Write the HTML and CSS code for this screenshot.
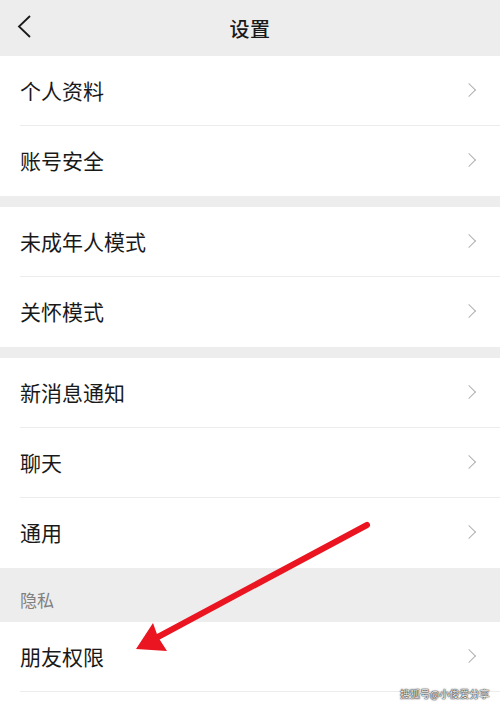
FILE: index.html
```html
<!DOCTYPE html>
<html lang="zh">
<head>
<meta charset="utf-8">
<link rel="stylesheet" href="styles.css">
</head>
<body>
<div class="page">
  <header class="topbar">
    <svg class="back" width="16" height="24" viewBox="0 0 16 24"><path d="M13 1 L2 11.5 L13 22" fill="none" stroke="#1a1a1a" stroke-width="1.8"/></svg>
    <div class="title">设置</div>
  </header>

  <section class="group">
    <div class="row"><span>个人资料</span><i class="chev"></i></div>
    <div class="row last"><span>账号安全</span><i class="chev"></i></div>
  </section>

  <section class="group">
    <div class="row"><span>未成年人模式</span><i class="chev"></i></div>
    <div class="row last"><span>关怀模式</span><i class="chev"></i></div>
  </section>

  <section class="group flush">
    <div class="row"><span>新消息通知</span><i class="chev"></i></div>
    <div class="row"><span>聊天</span><i class="chev"></i></div>
    <div class="row last"><span>通用</span><i class="chev"></i></div>
  </section>

  <div class="section-title">隐私</div>

  <section class="group flush tail">
    <div class="row"><span>朋友权限</span><i class="chev"></i></div>
  </section>

  <svg class="arrow" width="500" height="706" viewBox="0 0 500 706">
    <line x1="367" y1="525" x2="156" y2="638" stroke="#ea1520" stroke-width="6" stroke-linecap="round"/>
    <path d="M136 649 L153 623 L158 637 L167 651 Z" fill="#ea1520"/>
  </svg>

  <div class="watermark">搜狐号@小俊爱分享</div>
</div>
</body>
</html>
```

FILE: styles.css
```css
* { box-sizing: border-box; margin: 0; padding: 0; }
html, body { width: 500px; height: 706px; overflow: hidden; }
body {
  background: #ffffff;
  font-family: "Noto Sans CJK SC", "Noto Sans", sans-serif;
  color: #191919;
}
.page { position: relative; width: 500px; height: 706px; background: #ededed; }
.topbar {
  height: 56px;
  background: #ededed;
  display: flex;
  align-items: center;
  justify-content: center;
  position: relative;
}
.back { position: absolute; left: 17px; top: 15px; }
.title { font-size: 20px; font-weight: 500; color: #191919; letter-spacing: 0.5px; }
.group { background: #fff; margin-bottom: 11px; }
.group.flush { margin-bottom: 0; }
.group.tail { padding-bottom: 20px; }
.row {
  height: 70px;
  display: flex;
  align-items: center;
  justify-content: space-between;
  padding: 0 24px 2px 20px;
  font-size: 21px;
  position: relative;
}
.row::after {
  content: "";
  position: absolute;
  left: 20px;
  right: 0;
  bottom: 0;
  height: 1px;
  background: #ececec;
}
.row.last::after { display: none; }
.chev {
  width: 10px;
  height: 10px;
  border-top: 1.8px solid #b2b2b2;
  border-right: 1.8px solid #b2b2b2;
  transform: rotate(45deg);
  margin-right: 2px;
}
.section-title {
  height: 54px;
  display: flex;
  align-items: center;
  padding: 8px 20px 0;
  font-size: 17px;
  color: #808080;
}
.arrow { position: absolute; left: 0; top: 0; pointer-events: none; }
.watermark {
  position: absolute;
  left: 400px;
  top: 686px;
  font-size: 10px;
  color: #f4f4f4;
  text-shadow: 0 0 1px #222, 0 0 1px #222, 0 0 2px #555;
  white-space: nowrap;
}
```
